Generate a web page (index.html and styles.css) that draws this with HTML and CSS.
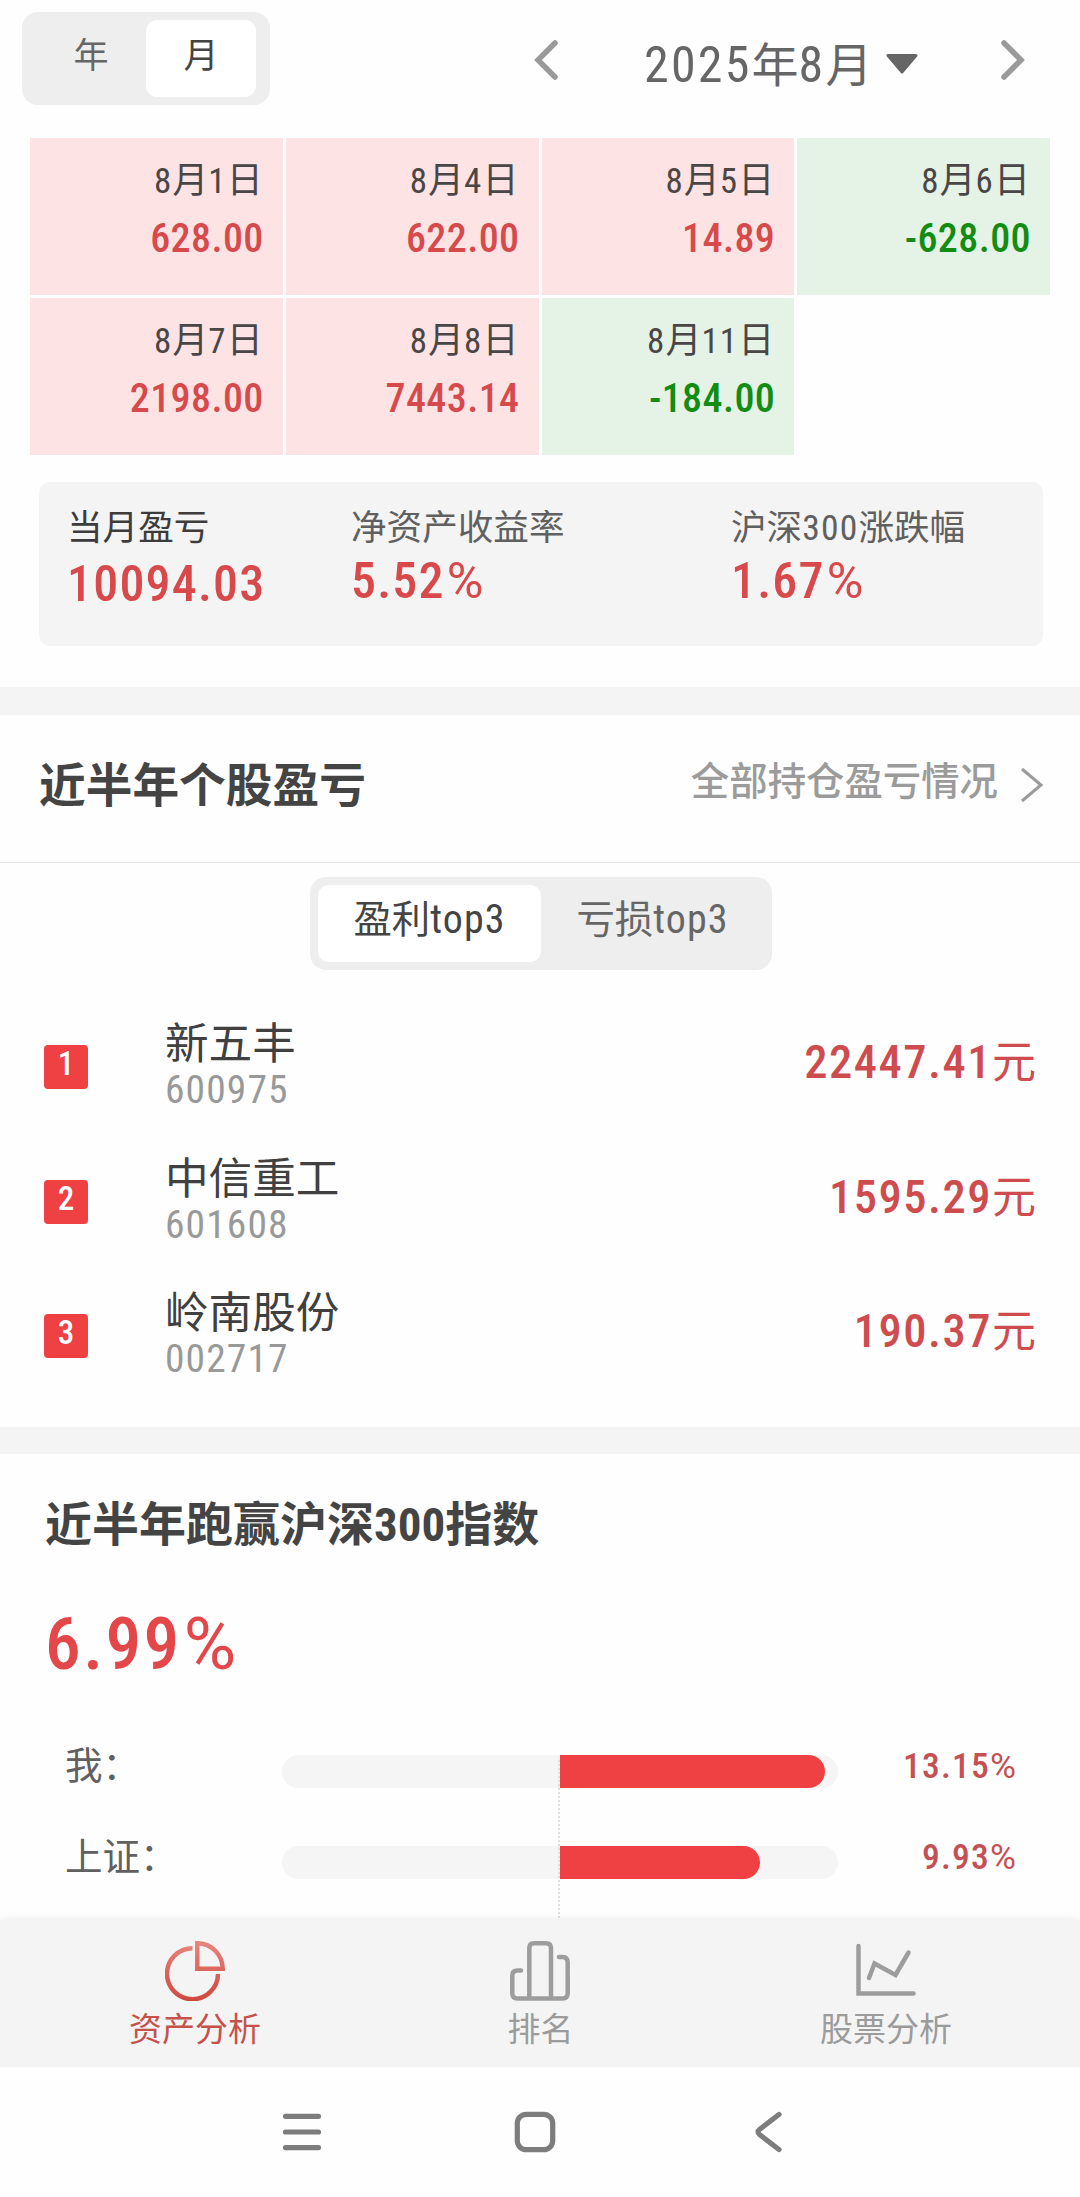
FILE: index.html
```html
<!DOCTYPE html>
<html lang="zh-CN">
<head>
<meta charset="utf-8">
<title>资产分析</title>
<link rel="stylesheet" href="styles.css">
</head>
<body>
<main class="content">
  <section class="calendar">
    <header class="calendar-head">
      <div class="segment segment-period">
        <span class="seg">年</span>
        <span class="seg seg-on">月</span>
      </div>
      <svg class="chevron" viewBox="0 0 26 42"><path d="M22 4 5 21 22 38"/></svg>
      <div class="month"><span class="month-text"><b>2025</b>年<b>8</b>月</span>
        <svg class="caret" viewBox="0 0 32 20"><path d="M2 1.5H30L16 18Z"/></svg>
      </div>
      <svg class="chevron" viewBox="0 0 26 42"><path d="M4 4 21 21 4 38"/></svg>
    </header>
    <div class="days">
      <div class="day up"><p class="date"><b>8</b>月<b>1</b>日</p><p class="amount">628.00</p></div>
      <div class="day up"><p class="date"><b>8</b>月<b>4</b>日</p><p class="amount">622.00</p></div>
      <div class="day up"><p class="date"><b>8</b>月<b>5</b>日</p><p class="amount">14.89</p></div>
      <div class="day down"><p class="date"><b>8</b>月<b>6</b>日</p><p class="amount">-628.00</p></div>
      <div class="day up"><p class="date"><b>8</b>月<b>7</b>日</p><p class="amount">2198.00</p></div>
      <div class="day up"><p class="date"><b>8</b>月<b>8</b>日</p><p class="amount">7443.14</p></div>
      <div class="day down"><p class="date"><b>8</b>月<b>11</b>日</p><p class="amount">-184.00</p></div>
    </div>
    <div class="summary">
      <div class="stat stat-main"><p class="stat-label">当月盈亏</p><p class="stat-value">10094.03</p></div>
      <div class="stat"><p class="stat-label">净资产收益率</p><p class="stat-value">5.52<span class="pct">%</span></p></div>
      <div class="stat"><p class="stat-label">沪深<b>300</b>涨跌幅</p><p class="stat-value">1.67<span class="pct">%</span></p></div>
    </div>
  </section>

  <section class="stocks">
    <header class="stocks-head">
      <h2 class="title">近半年个股盈亏</h2>
      <a class="more">全部持仓盈亏情况<svg class="more-arrow" viewBox="0 0 24 36"><path d="M2 2 21 18 2 34"/></svg></a>
    </header>
    <div class="segment segment-top">
      <span class="seg seg-on">盈利<b>top3</b></span>
      <span class="seg">亏损<b>top3</b></span>
    </div>
    <ol class="rank">
      <li class="rank-row"><span class="badge">1</span><div class="stock"><p class="name">新五丰</p><p class="code">600975</p></div><p class="gain"><b>22447.41</b>元</p></li>
      <li class="rank-row"><span class="badge">2</span><div class="stock"><p class="name">中信重工</p><p class="code">601608</p></div><p class="gain"><b>1595.29</b>元</p></li>
      <li class="rank-row"><span class="badge">3</span><div class="stock"><p class="name">岭南股份</p><p class="code">002717</p></div><p class="gain"><b>190.37</b>元</p></li>
    </ol>
  </section>

  <section class="versus">
    <h2 class="title">近半年跑赢沪深300指数</h2>
    <p class="lead">6.99<span class="pct">%</span></p>
    <div class="bars">
      <div class="bar-row"><span class="bar-label">我：</span><div class="track"><div class="fill" style="width:265px"></div></div><span class="bar-value">13.15<span class="pct">%</span></span></div>
      <div class="bar-row"><span class="bar-label">上证：</span><div class="track"><div class="fill" style="width:200px"></div></div><span class="bar-value">9.93<span class="pct">%</span></span></div>
      <i class="axis"></i>
    </div>
  </section>
</main>

<nav class="tabs">
  <a class="tab tab-on">
    <svg class="tab-icon" viewBox="0 0 60 60">
      <defs><linearGradient id="pie" x1="0" y1="0" x2="0" y2="60" gradientUnits="userSpaceOnUse"><stop offset="0" stop-color="#e8867c"/><stop offset="1" stop-color="#cf4840"/></linearGradient></defs>
      <path d="M27.5 7.2A25.5 25.5 0 1 0 53 33" stroke="url(#pie)"/>
      <path d="M32.3 2.3V27.7H57.7C57.5 13.5 46.5 2.5 32.3 2.3Z" stroke="url(#pie)"/>
    </svg>
    <span class="tab-label">资产分析</span>
  </a>
  <a class="tab">
    <svg class="tab-icon" viewBox="0 0 60 60"><path d="M11 29.5H7.5Q2.3 29.5 2.3 34.5V52Q2.3 57.5 7.5 57.5H52.5Q57.7 57.5 57.7 52V21.5Q57.7 16 52.5 16H49M19.3 57.5V7.5Q19.3 2.3 24 2.3H36Q41 2.3 41 7.5V57.5" stroke-linecap="round"/></svg>
    <span class="tab-label">排名</span>
  </a>
  <a class="tab">
    <svg class="tab-icon" viewBox="0 0 60 60"><path d="M2.5 5V52.5H57.5M13 37 18.5 22.5 39.5 34 52.5 11.5" stroke-linecap="round" stroke-linejoin="miter"/></svg>
    <span class="tab-label">股票分析</span>
  </a>
</nav>

<footer class="system">
  <svg class="sys-icon" viewBox="0 0 44 44"><path d="M5.5 6.3H38.5M5.5 22H38.5M5.5 37.6H38.5"/></svg>
  <svg class="sys-icon" viewBox="0 0 44 44"><rect x="4.3" y="4.3" width="35.4" height="35.4" rx="9"/></svg>
  <svg class="sys-icon" viewBox="0 0 44 44"><path d="M33 4.5 13.5 19.5Q10.500 22 13.5 24.5L33 39.5"/></svg>
</footer>
</body>
</html>
```
FILE: styles.css
```css
* { box-sizing: border-box; }

body {
  margin: 0;
  width: 1080px;
  height: 2197px;
  overflow: hidden;
  display: flex;
  flex-direction: column;
  background: #fefefe;
  color: #444;
  font-family: "Roboto Condensed", "Noto Sans CJK SC", sans-serif;
  font-size: 36px;
}

p, h2, ol { margin: 0; padding: 0; }
svg { display: block; fill: none; flex: none; }
b { font-weight: 450; }
.pct { font-family: Roboto, sans-serif; font-weight: 450; letter-spacing: 0; }

.content { height: 1920px; overflow: hidden; flex: none; }

/* Segmented switches */
.segment {
  display: flex;
  height: 93px;
  padding: 8px;
  border-radius: 16px;
  background: #eee;
}
.seg {
  flex: 1;
  height: 77px;
  border-radius: 11px;
  line-height: 70px;
  text-align: center;
  color: #666;
}
.seg-on { background: #fff; color: #444; }
.segment-period { width: 248px; padding-right: 14px; margin-right: 263px; }
.segment-period .seg { font-size: 35px; line-height: 73px; }
.segment-period .seg:first-child { flex: none; width: 116px; padding: 0 4px 0 10px; }
.segment-top { width: 462px; margin: 14px auto 0 310px; }
.segment-top .seg { font-size: 38.4px; flex: none; width: 223px; }
.segment-top b { font-size: 40px; letter-spacing: 1.1px; }

/* Calendar */
.calendar { height: 687px; padding-top: 12px; }
.calendar-head {
  display: flex;
  align-items: flex-start;
  height: 126px;
  padding-left: 22px;
}
.chevron { width: 26px; height: 42px; margin-top: 27px; stroke: #9a9a9a; stroke-width: 5.5; stroke-linecap: round; }
.month {
  display: flex;
  align-items: center;
  width: 441px;
  height: 104px;
  padding-left: 85px;
  font-size: 47px;
  color: #666;
}
.month b { font-size: 50px; letter-spacing: 2.2px; }
.month-text { width: 242px; padding-bottom: 6px; white-space: nowrap; }
.caret { width: 32px; height: 20px; fill: #666; stroke: #666; stroke-width: 3; stroke-linejoin: round; }
.days {
  display: grid;
  grid-template-columns: repeat(4, 1fr);
  grid-auto-rows: 157px;
  gap: 3px;
  margin: 0 30px;
}
.day { padding: 17px 20px 0 0; text-align: right; }
.up { background: #fde3e3; color: #d64a4c; }
.down { background: #e4f3e5; color: #138c13; }
.date { font-size: 36px; line-height: 52px; color: #4a4646; }
.date b { font-size: 35px; letter-spacing: 1.1px; }
.amount { margin: 4px -1px 0 0; font-size: 40px; font-weight: 500; line-height: 54px; letter-spacing: .4px; }
.summary {
  display: grid;
  grid-template-columns: 284px 380px 1fr;
  width: 1004px;
  height: 164px;
  margin: 27px 0 0 39px;
  padding: 19px 0 0 28px;
  border-radius: 11px;
  background: #f4f4f4;
}
.stat-label { font-size: 35.6px; line-height: 54px; color: #606060; }
.stat-label b { letter-spacing: 1.2px; }
.stat-value { font-size: 50px; font-weight: 500; line-height: 53px; letter-spacing: 1.2px; color: #d8494b; }
.stat-value .pct { margin-left: 2px; }
.stat-main .stat-label { color: #3c3c3c; }
.stat-main .stat-value { padding-top: 3px; }

/* Stock ranking */
.stocks { height: 740px; border-top: 28px solid #f4f4f4; }
.stocks-head {
  display: flex;
  justify-content: space-between;
  height: 148px;
  padding: 35px 36px 0 39px;
  border-bottom: 1px solid #e8e8e8;
}
.title { font-size: 46.7px; font-weight: 700; line-height: 72px; color: #444; }
.more { display: flex; font-size: 38.4px; font-weight: 500; line-height: 64px; color: #9b9b9b; }
.more-arrow { width: 24px; height: 36px; margin: 17px 0 0 22px; stroke: #9b9b9b; stroke-width: 3; }
.rank { list-style: none; padding: 48px 44px 0 44px; }
.rank-row { display: flex; height: 134.5px; }
.badge {
  width: 44px;
  height: 44px;
  margin: 27px 77px 0 0;
  border-radius: 4px;
  background: #ef4043;
  color: #fff;
  font-size: 33px;
  font-weight: 500;
  line-height: 37px;
  text-align: center;
}
.name { padding-top: 3px; font-size: 43.6px; line-height: 48px; color: #404040; }
.code { font-size: 39.5px; font-weight: 450; line-height: 42px; letter-spacing: 1.1px; color: #999; }
.gain { margin-left: auto; font-size: 44px; line-height: 88px; color: #cf4c4e; }
.gain b { font-size: 46.5px; font-weight: 500; letter-spacing: 1.5px; }

/* Benchmark comparison */
.versus { border-top: 27px solid #f4f4f4; padding: 35px 0 0 45px; }
.versus .title { font-size: 47px; }
.lead { margin-top: 44px; font-size: 71.5px; font-weight: 500; line-height: 80px; letter-spacing: 2.4px; color: #e3474a; }
.lead .pct { margin-left: 2px; }
.bars { position: relative; margin-top: 35px; }
.bar-row { display: flex; height: 91px; align-items: center; padding: 0 64px 0 20px; }
.bar-label { width: 217px; font-size: 37.5px; line-height: 60px; color: #606060; }
.track { width: 556px; height: 33px; padding-left: 278px; margin-top: 12px; border-radius: 17px; background: #f5f5f5; }
.fill { height: 33px; border-radius: 0 17px 17px 0; background: #ef4043; }
.bar-value { margin-left: auto; font-size: 35.5px; font-weight: 500; line-height: 60px; letter-spacing: 1.2px; color: #c45053; }
.axis {
  position: absolute;
  left: 513px;
  top: 40px;
  width: 2px;
  height: 170px;
  background: repeating-linear-gradient(#dedede 0 2px, transparent 2px 4px);
}

/* Bottom tab bar */
.tabs {
  display: flex;
  justify-content: space-between;
  height: 147px;
  padding: 21px 22px 0;
  background: #f4f4f4;
  box-shadow: 0 -1px 8px rgba(0, 0, 0, .08);
  position: relative;
  flex: none;
}
.tab { display: flex; flex-direction: column; align-items: center; width: 345px; color: #9b9b9b; }
.tab-on { color: #c5524a; }
.tab-icon { width: 60px; height: 60px; stroke: #9d9d9d; stroke-width: 4.5; }
.tab-label { margin-top: 5px; padding-left: 1px; font-size: 33px; line-height: 48px; }

/* System navigation */
.system { display: flex; gap: 189px; height: 130px; padding: 43px 0 0 280px; background: #fefefe; position: relative; }
.sys-icon { width: 44px; height: 44px; stroke: #7d7d7d; stroke-width: 5.2; stroke-linecap: round; }
```
